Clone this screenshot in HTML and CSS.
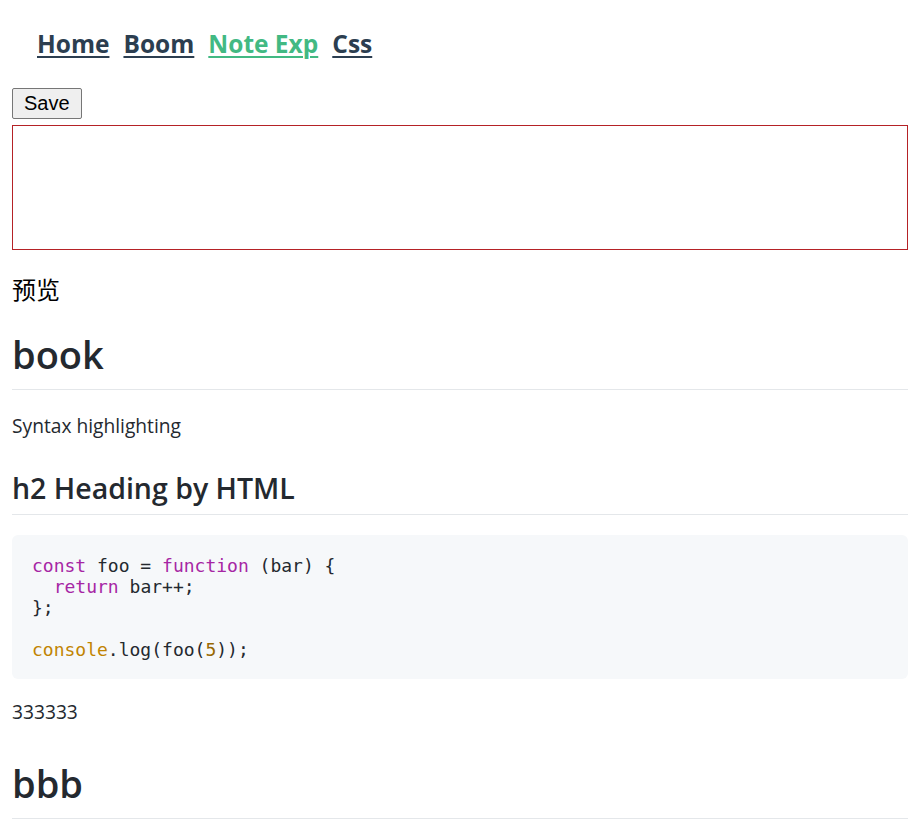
FILE: index.html
```html
<!DOCTYPE html>
<html lang="zh">
<head>
<meta charset="utf-8">
<title>Note Exp</title>
<link rel="stylesheet" href="styles.css">
</head>
<body>
<div class="app">
  <nav class="nav">
    <a class="nav-link" href="#">Home</a>
    <a class="nav-link" href="#">Boom</a>
    <a class="nav-link active" href="#">Note Exp</a>
    <a class="nav-link" href="#">Css</a>
  </nav>
  <div class="editor">
    <button class="save-btn" type="button">Save</button>
    <textarea class="input"></textarea>
  </div>
  <div class="preview-label">预览</div>
  <div class="markdown-body">
    <h1 class="md-h1">book</h1>
    <p class="md-p">Syntax highlighting</p>
    <h2 class="md-h2">h2 Heading by HTML</h2>
    <pre class="md-pre"><code><span class="kw">const</span> foo = <span class="kw">function</span> (bar) {
  <span class="kw">return</span> bar++;
};

<span class="bi">console</span>.log(foo(<span class="num">5</span>));</code></pre>
    <p class="md-p">333333</p>
    <h1 class="md-h1">bbb</h1>
  </div>
</div>
</body>
</html>
```
FILE: styles.css
```css
html, body {
  margin: 0;
  padding: 0;
  background: #ffffff;
}

.app {
  padding: 0 3px 0 12px;
  font-family: "Open Sans", "Noto Sans", sans-serif;
}

.nav {
  display: flex;
  gap: 14px;
  padding: 28px 0 0 25px;
  height: 32px;
  line-height: 32px;
  font-size: 24.5px;
  font-weight: 700;
}

.nav-link {
  color: #2c3e50;
  text-decoration: underline;
  text-decoration-thickness: 2px;
  text-underline-offset: 3px;
}

.nav-link.active {
  color: #42b983;
}

.editor {
  padding-top: 28px;
  display: flex;
  flex-direction: column;
  align-items: flex-start;
  gap: 6px;
}

.save-btn {
  font-family: "Liberation Sans", Arial, sans-serif;
  font-size: 20px;
  line-height: 23px;
  height: 31px;
  padding: 3px 11px;
  color: #000;
  background: #efefef;
  border: 1px solid #767676;
  border-radius: 2px;
}

.input {
  box-sizing: border-box;
  width: 100%;
  height: 125px;
  margin: 0;
  border: 1px solid #b52226;
  resize: none;
  outline: none;
}

.preview-label {
  margin-top: 23px;
  font-family: "Noto Sans CJK SC", sans-serif;
  font-size: 24px;
  line-height: 32px;
  color: #000;
}

.markdown-body {
  padding-top: 25px;
  color: #24292f;
  font-size: 19.2px;
  line-height: 1.5;
}

.md-h1 {
  margin: 32px 0 22px;
  padding-bottom: 11px;
  font-size: 38px;
  line-height: 48px;
  font-weight: 600;
  border-bottom: 1px solid #e4e7ea;
}

.markdown-body > .md-h1:first-child {
  margin-top: 0;
}

.md-p {
  margin: 0 0 19px;
}

.md-h2 {
  margin: 29px 0 20px;
  padding-bottom: 8px;
  font-size: 28.5px;
  line-height: 36px;
  font-weight: 600;
  border-bottom: 1px solid #e4e7ea;
}

.md-pre {
  margin: 0 0 19px;
  padding: 20px 20px 19px;
  background: #f6f8fa;
  border-radius: 6px;
  font-family: "DejaVu Sans Mono", monospace;
  font-size: 18px;
  line-height: 21px;
  color: #24292f;
}

.kw {
  color: #a626a4;
}

.bi {
  color: #c18401;
}

.num {
  color: #986801;
}
```
